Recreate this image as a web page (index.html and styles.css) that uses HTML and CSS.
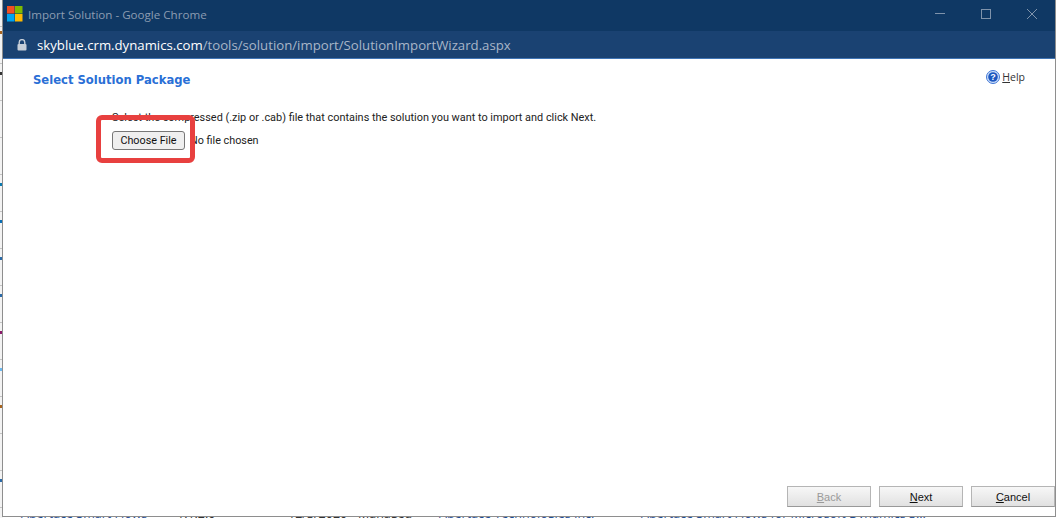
FILE: index.html
```html
<!DOCTYPE html>
<html lang="en">
<head>
<meta charset="utf-8">
<title>Import Solution</title>
<link rel="stylesheet" href="styles.css">
</head>
<body>
<div class="desktop">
  <div class="ticks">
    <i class="tick t8"></i><i class="tick t9"></i><i class="tick t1"></i><i class="tick t2"></i><i class="tick t3"></i><i class="tick t4"></i><i class="tick t5"></i><i class="tick t6"></i><i class="tick t7"></i><i class="tick t10"></i>
  </div>
  <div class="behind">
    <span class="b1">Abertace Smart Flows</span><span class="b2">1.1.2.0</span><span class="b3">12/3/2020</span><span class="b4">Managed</span><span class="b5">Abertace Technologies Inc.</span><span class="b6">Abertace Smart Flows for Microsoft Dynamics 3...</span>
  </div>
  <main class="window">
    <header class="titlebar">
      <svg class="logo" width="16" height="16" viewBox="0 0 16 16"><rect x="0" y="0" width="7.5" height="7.5" fill="#f25022"/><rect x="8" y="0" width="7.5" height="7.5" fill="#7fba00"/><rect x="0" y="8" width="7.5" height="7.5" fill="#00a4ef"/><rect x="8" y="8" width="7.5" height="7.5" fill="#ffb900"/></svg>
      <span class="title">Import Solution - Google Chrome</span>
      <div class="controls">
        <svg width="10" height="10" viewBox="0 0 10 10"><path d="M0 4.5H10" stroke="#7f93ab" fill="none"/></svg>
        <svg width="10" height="10" viewBox="0 0 10 10"><rect x="0.5" y="0.5" width="9" height="9" stroke="#7f93ab" fill="none"/></svg>
        <svg width="10" height="10" viewBox="0 0 10 10"><path d="M0 0L10 10M10 0L0 10" stroke="#7f93ab" fill="none"/></svg>
      </div>
    </header>
    <div class="addressbar">
      <svg class="lock" width="10" height="12" viewBox="0 0 10 12"><path d="M2.2 5V3.4a2.8 2.8 0 0 1 5.6 0V5" fill="none" stroke="#c6ced8" stroke-width="1.4"/><rect x="0.5" y="5" width="9" height="6.5" rx="1" fill="#c6ced8"/></svg>
      <span class="url"><b>skyblue.crm.dynamics.com</b>/tools/solution/import/SolutionImportWizard.aspx</span>
    </div>
    <section class="page">
      <div class="pagehead">
        <h1 class="heading">Select Solution Package</h1>
        <a class="help">
          <svg width="14" height="14" viewBox="0 0 14 14"><circle cx="7" cy="7" r="6.5" fill="#cfe0fa" stroke="#3f76d6"/><circle cx="7" cy="7" r="4.8" fill="#1d57c0"/><text x="7" y="10" text-anchor="middle" class="q">?</text></svg>
          <span><u>H</u>elp</span>
        </a>
      </div>
      <div class="content">
        <p class="instr">Select the compressed (.zip or .cab) file that contains the solution you want to import and click Next.</p>
        <div class="picker">
          <button class="choose" type="button">Choose File</button>
          <span class="nofile">No file chosen</span>
          <div class="callout"></div>
        </div>
      </div>
      <footer class="actions">
        <button class="btn" type="button" disabled><u>B</u>ack</button>
        <button class="btn" type="button"><u>N</u>ext</button>
        <button class="btn" type="button"><u>C</u>ancel</button>
      </footer>
    </section>
  </main>
</div>
</body>
</html>
```

FILE: styles.css
```css
* { box-sizing: border-box; }
html, body { margin: 0; height: 100%; overflow: hidden; }
body { background: #fff; font-family: "Open Sans", sans-serif; }
.desktop { position: relative; width: 1057px; height: 518px; background: #fff; overflow: hidden; }
.ticks { position: absolute; left: 0; top: 0; width: 3px; height: 518px; background: repeating-linear-gradient(#f3f3f3 0 26px, #c4c4c4 26px 27px, #f3f3f3 27px 37px); }
.tick { position: absolute; left: 0; width: 2px; height: 3px; }
.t8 { top: 31px; background: #a8641e; }
.t9 { top: 72px; background: #333; }
.t1 { top: 183px; background: #0a7ab0; }
.t2 { top: 220px; background: #0a6fb5; }
.t3 { top: 257px; background: #2a6aa8; }
.t4 { top: 294px; background: #2a6aa8; }
.t5 { top: 331px; background: #8a1a6a; }
.t6 { top: 368px; background: #6ab8f0; }
.t7 { top: 405px; background: #a8641e; }
.t10 { top: 479px; background: #2a6aa8; }
.behind { position: absolute; left: 0; top: 507px; width: 100%; height: 14px; font: 12.5px/14px "Open Sans", sans-serif; color: #333; white-space: nowrap; }
.behind span { position: absolute; top: 0; }
.b1 { left: 21px; color: #1f4e96; }
.b2 { left: 177px; }
.b3 { left: 288px; }
.b4 { left: 358px; }
.b5 { left: 439px; color: #1f4e96; }
.b6 { left: 641px; color: #1f4e96; }
.window { position: absolute; left: 2px; top: 0; width: 1054px; height: 517px; display: flex; flex-direction: column; background: #fff; border: 1px solid #8e8e8e; border-top: 0; }
.titlebar { height: 31px; flex: none; display: flex; align-items: center; background: #0f3864; padding: 0 0 3px 4px; }
.logo { flex: none; }
.title { margin: 1px 0 0 5px; font: 11.6px "Open Sans", sans-serif; color: #8c9cb2; }
.controls { margin-left: auto; display: flex; gap: 36px; padding-right: 18px; align-items: center; }
.controls svg { display: block; }
.addressbar { height: 28px; flex: none; display: flex; align-items: center; background: #1a4272; border-bottom: 1px solid #3f74b5; padding-left: 14px; }
.lock { flex: none; }
.url { margin-left: 10px; font: 13.2px "Open Sans", sans-serif; color: #a9b6c8; white-space: nowrap; }
.url b { font-weight: 400; color: #fff; }
.page { flex: 1; min-height: 0; display: flex; flex-direction: column; }
.pagehead { display: flex; justify-content: space-between; align-items: center; height: 38px; padding: 3px 30px 0 30px; }
.heading { margin: 0; font: bold 11.6px "DejaVu Sans", sans-serif; color: #2a6fd6; }
.help { display: flex; align-items: center; gap: 2px; font: 10.5px "Open Sans", sans-serif; color: #333; margin-top: -6px; }
.help svg { display: block; }
.q { font: bold 9px "Liberation Sans", sans-serif; fill: #fff; }
.content { padding: 14px 0 0 109px; flex: 1; }
.instr { margin: 0; font: 10.9px/14px Roboto, sans-serif; color: #222; }
.picker { position: relative; display: flex; align-items: center; margin-top: 5px; height: 20px; }
.choose { width: 73px; height: 19px; padding: 0; border: 1px solid #777; border-radius: 3px; background: #efefef; font: 10.8px Roboto, sans-serif; color: #111; }
.nofile { margin-left: 5px; font: 10.8px Roboto, sans-serif; color: #222; }
.callout { position: absolute; left: -16px; top: -15px; width: 99px; height: 48px; border: 5px solid #e8403f; border-radius: 6px; }
.actions { display: flex; justify-content: flex-end; gap: 8px; padding: 0 0 9px 0; }
.btn { width: 84px; height: 21px; padding: 0; border: 1px solid #b5b5b5; border-bottom-color: #999; background: linear-gradient(#f7f7f7, #e1e1e1); font: 11px "Liberation Sans", sans-serif; color: #111; }
.btn:disabled { color: #9a9a9a; }
```
